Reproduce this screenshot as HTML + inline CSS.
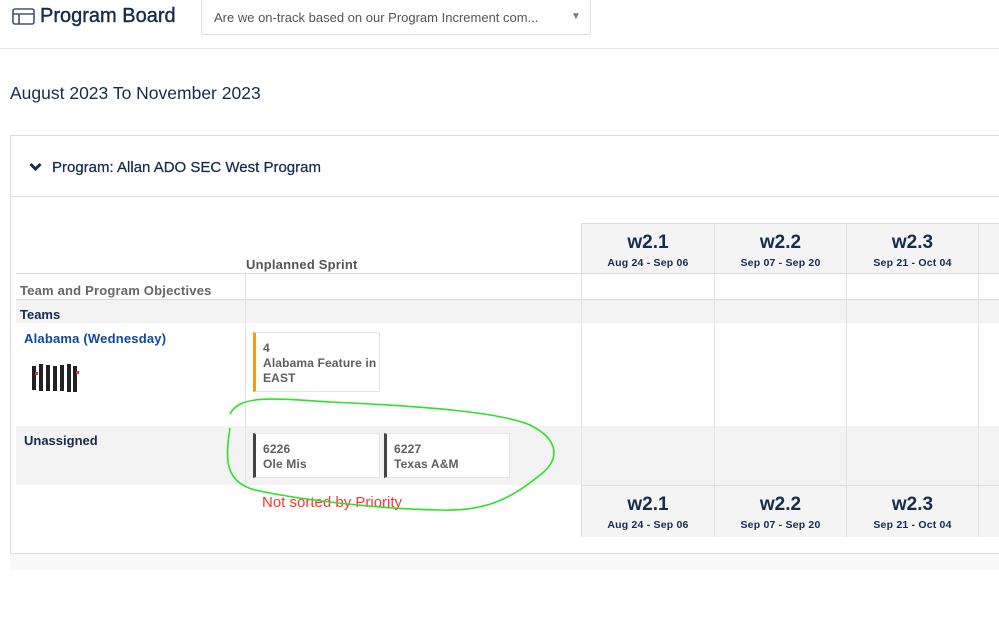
<!DOCTYPE html>
<html><head><meta charset="utf-8"><style>
*{margin:0;padding:0;box-sizing:border-box}
body{width:999px;height:636px;overflow:hidden;background:#fff;font-family:"Liberation Sans",Arial,sans-serif;position:relative;color:#172b4d}
.a{position:absolute}
.hd{font-weight:bold;text-align:center;background:#f4f4f4;border-left:1px solid #ddd;border-top:1px solid #ddd;border-bottom:1px solid #ddd}
.hd b{display:block;font-size:19px;margin-top:8px;color:#172b4d}
.hd span{display:block;font-size:10.5px;margin-top:3px;color:#172b4d;letter-spacing:0.2px}
.card{position:absolute;background:#fff;border:1px solid #e4e4e4;font-size:12px;font-weight:bold;color:#5e5e5e;padding:8px 0 0 7px;line-height:15px;letter-spacing:0.15px;white-space:nowrap;overflow:hidden}
.vl{position:absolute;width:1px;background:#e2e2e2}
</style></head><body>
<svg class="a" style="left:12px;top:8px" width="23" height="17" viewBox="0 0 23 17"><rect x="1" y="1" width="21" height="15" rx="2" fill="none" stroke="#42526e" stroke-width="1.6"/><line x1="1" y1="6" x2="22" y2="6" stroke="#42526e" stroke-width="1.6"/><line x1="7" y1="6" x2="7" y2="16" stroke="#42526e" stroke-width="1.6"/></svg>
<div class="a" style="left:40px;top:5px;font-size:20px;color:#172b4d;-webkit-text-stroke:0.4px #172b4d">Program Board</div>
<div class="a" style="left:201px;top:-2px;width:390px;height:37px;border:1px solid #ddd;border-radius:3px"></div>
<div class="a" style="left:214px;top:10px;font-size:13px;color:#555">Are we on-track based on our Program Increment com...</div>
<div class="a" style="left:571px;top:11px;font-size:10px;color:#777">▼</div>
<div class="a" style="left:0;top:48px;width:999px;height:1px;background:#e6e6e6"></div>
<div class="a" style="left:10px;top:83px;font-size:17.5px;color:#172b4d">August 2023 To November 2023</div>
<div class="a" style="left:10px;top:135px;width:995px;height:419px;border:1px solid #ddd"></div>
<div class="a" style="left:10px;top:554px;width:989px;height:16px;background:#f8f8f8"></div>
<svg class="a" style="left:29px;top:162px" width="13" height="10" viewBox="0 0 13 10"><path d="M1.5 2 L6.5 7 L11.5 2" fill="none" stroke="#172b4d" stroke-width="3"/></svg>
<div class="a" style="left:52px;top:159px;font-size:15px;color:#172b4d;-webkit-text-stroke:0.25px #172b4d">Program: Allan ADO SEC West Program</div>
<div class="a" style="left:11px;top:196px;width:988px;height:1px;background:#ddd"></div>
<div class="a" style="left:16px;top:273px;width:983px;height:1px;background:#ddd"></div>
<div class="a" style="left:16px;top:299px;width:983px;height:1px;background:#ddd"></div>
<div class="a" style="left:16px;top:300px;width:983px;height:23px;background:#f3f3f3"></div>
<div class="a" style="left:16px;top:426px;width:983px;height:59px;background:#f3f3f3"></div>
<div class="vl" style="left:245px;top:274px;height:211px"></div>
<div class="vl" style="left:581px;top:223px;height:313px"></div>
<div class="vl" style="left:714px;top:223px;height:313px"></div>
<div class="vl" style="left:846px;top:223px;height:313px"></div>
<div class="vl" style="left:978px;top:223px;height:313px"></div>
<div class="a" style="left:246px;top:257px;font-size:13px;font-weight:bold;color:#555;letter-spacing:0.2px">Unplanned Sprint</div>
<div class="a" style="left:20px;top:283px;font-size:13px;font-weight:bold;color:#666;letter-spacing:0.2px">Team and Program Objectives</div>
<div class="a" style="left:20px;top:307px;font-size:13px;font-weight:bold;color:#172b4d">Teams</div>
<div class="a" style="left:24px;top:331px;font-size:13px;font-weight:bold;color:#0b47a8;letter-spacing:0.2px">Alabama (Wednesday)</div>
<svg class="a" style="left:30px;top:360px" width="50" height="36"><g fill="#222"><rect x="2" y="6" width="4" height="24"/><rect x="9" y="4" width="4" height="27"/><rect x="16" y="5" width="4" height="26"/><rect x="23" y="6" width="4" height="25"/><rect x="30" y="5" width="4" height="26"/><rect x="37" y="4" width="4" height="28"/><rect x="43" y="6" width="4" height="26"/></g><g fill="#d33"><rect x="5" y="12" width="3" height="3"/><rect x="46" y="11" width="3" height="3"/></g></svg>
<div class="a" style="left:24px;top:433px;font-size:13px;font-weight:bold;color:#172b4d">Unassigned</div>
<div class="a hd" style="left:581px;top:223px;width:133px;height:51px"><b>w2.1</b><span>Aug 24 - Sep 06</span></div>
<div class="a hd" style="left:714px;top:223px;width:132px;height:51px"><b>w2.2</b><span>Sep 07 - Sep 20</span></div>
<div class="a hd" style="left:846px;top:223px;width:132px;height:51px"><b>w2.3</b><span>Sep 21 - Oct 04</span></div>
<div class="a hd" style="left:978px;top:223px;width:30px;height:51px"></div>
<div class="a hd" style="left:581px;top:485px;width:133px;height:52px;border-bottom:none"><b>w2.1</b><span>Aug 24 - Sep 06</span></div>
<div class="a hd" style="left:714px;top:485px;width:132px;height:52px;border-bottom:none"><b>w2.2</b><span>Sep 07 - Sep 20</span></div>
<div class="a hd" style="left:846px;top:485px;width:132px;height:52px;border-bottom:none"><b>w2.3</b><span>Sep 21 - Oct 04</span></div>
<div class="a hd" style="left:978px;top:485px;width:30px;height:52px;border-bottom:none"></div>
<div class="card" style="left:253px;top:332px;width:127px;height:60px;border-left:3px solid #f79a1a">4<br>Alabama Feature in<br>EAST</div>
<div class="card" style="left:253px;top:433px;width:127px;height:45px;border-left:3px solid #444">6226<br>Ole Mis</div>
<div class="card" style="left:384px;top:433px;width:126px;height:45px;border-left:3px solid #444">6227<br>Texas A&amp;M</div>
<div class="a" style="left:262px;top:494px;font-size:15px;color:#f33">Not sorted by Priority</div>
<svg class="a" style="left:0;top:0" width="999" height="636"><path d="M230 414 C240 395 270 398 330 402 C420 406 500 412 530 425 C560 440 560 460 540 475 C515 495 490 512 440 510 C380 509 300 500 255 490 C225 482 225 460 230 428" fill="none" stroke="#2de02a" stroke-width="1.6"/></svg>
</body></html>
